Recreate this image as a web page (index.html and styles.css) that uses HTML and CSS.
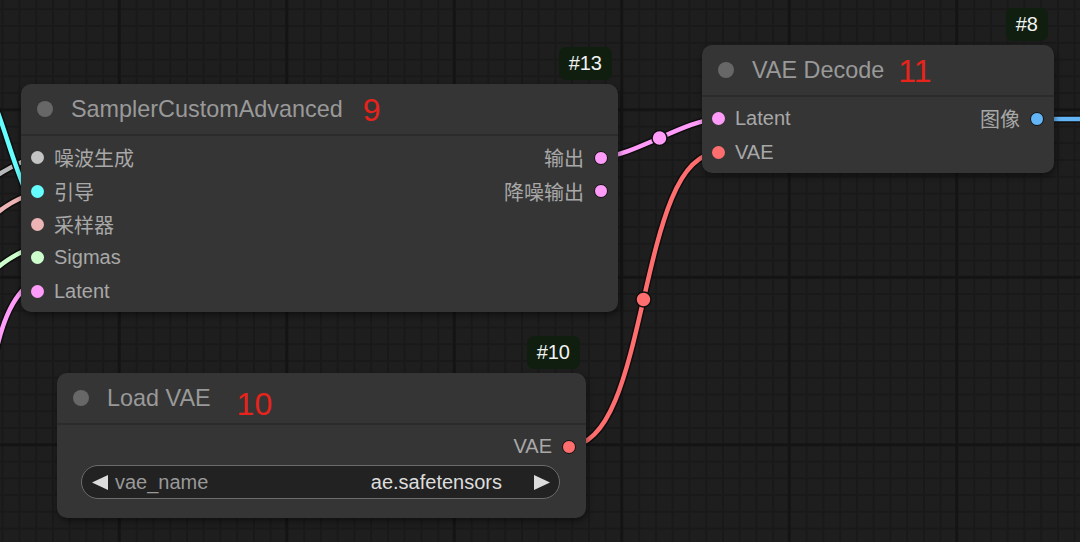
FILE: index.html
```html
<!DOCTYPE html>
<html lang="zh">
<head>
    <meta charset="UTF-8">
    <meta name="viewport" content="width=device-width, initial-scale=1.0">
    <title>ComfyUI graph</title>
    <link rel="stylesheet" href="styles.css">
</head>
<body>

    <div class="canvas">
        <!-- links sit under the nodes -->
        <svg class="links" width="1080" height="542" viewBox="0 0 1080 542">
            <g class="link link-noise">
                <path class="edge" d="M -5 177 Q 8 168 26 160"/>
                <path class="core" d="M -5 177 Q 8 168 26 160"/>
            </g>
            <g class="link link-guider">
                <path class="edge" d="M -3 110 C 8 140, 14 164, 26 192"/>
                <path class="core" d="M -3 110 C 8 140, 14 164, 26 192"/>
            </g>
            <g class="link link-sampler">
                <path class="edge" d="M -5 215 Q 8 203 26 196"/>
                <path class="core" d="M -5 215 Q 8 203 26 196"/>
            </g>
            <g class="link link-sigmas">
                <path class="edge" d="M -5 270 Q 8 258 26 250"/>
                <path class="core" d="M -5 270 Q 8 258 26 250"/>
            </g>
            <g class="link link-latent">
                <path class="edge" d="M -4 352 Q 6 305 26 287"/>
                <path class="core" d="M -4 352 Q 6 305 26 287"/>
            </g>

            <g class="link link-latent">
                <path class="edge" d="M 601 157 C 632 157, 687 119, 718 119"/>
                <path class="core" d="M 601 157 C 632 157, 687 119, 718 119"/>
                <circle class="mid" cx="659.5" cy="138" r="7.5"/>
            </g>
            <g class="link link-vae">
                <path class="edge" d="M 569 446 C 651 446, 636 153, 718 153"/>
                <path class="core" d="M 569 446 C 651 446, 636 153, 718 153"/>
                <circle class="mid" cx="643.5" cy="299.5" r="7.5"/>
            </g>
            <g class="link link-image">
                <path class="edge" d="M 1038 119 L 1090 119"/>
                <path class="core" d="M 1038 119 L 1090 119"/>
            </g>
        </svg>

        <div class="node node-sampler">
            <span class="badge">#13</span>
            <div class="title">
                <span class="title-dot"></span>
                <span class="title-text">SamplerCustomAdvanced</span>
                <span class="num">9</span>
            </div>
            <div class="slots">
                <div class="col inputs">
                    <div class="slot"><span class="dot t-noise"></span>噪波生成</div>
                    <div class="slot"><span class="dot t-guider"></span>引导</div>
                    <div class="slot"><span class="dot t-sampler"></span>采样器</div>
                    <div class="slot"><span class="dot t-sigmas"></span>Sigmas</div>
                    <div class="slot"><span class="dot t-latent"></span>Latent</div>
                </div>
                <div class="col outputs">
                    <div class="slot">输出<span class="dot t-latent"></span></div>
                    <div class="slot">降噪输出<span class="dot t-latent"></span></div>
                </div>
            </div>
        </div>

        <div class="node node-decode">
            <span class="badge">#8</span>
            <div class="title">
                <span class="title-dot"></span>
                <span class="title-text">VAE Decode</span>
                <span class="num num-near">11</span>
            </div>
            <div class="slots">
                <div class="col inputs">
                    <div class="slot"><span class="dot t-latent"></span>Latent</div>
                    <div class="slot"><span class="dot t-vae"></span>VAE</div>
                </div>
                <div class="col outputs">
                    <div class="slot">图像<span class="dot t-image"></span></div>
                </div>
            </div>
        </div>

        <div class="node node-loadvae">
            <span class="badge">#10</span>
            <div class="title">
                <span class="title-dot"></span>
                <span class="title-text">Load VAE</span>
                <span class="num num-far">10</span>
            </div>
            <div class="slots slots-tight">
                <div class="col inputs"></div>
                <div class="col outputs">
                    <div class="slot">VAE<span class="dot t-vae"></span></div>
                </div>
            </div>
            <div class="combo">
                <svg class="arrow" width="16" height="15" viewBox="0 0 16 15"><polygon points="16,0 16,15 0,7.5"/></svg>
                <span class="combo-label">vae_name</span>
                <span class="combo-value">ae.safetensors</span>
                <svg class="arrow" width="16" height="15" viewBox="0 0 16 15"><polygon points="0,0 0,15 16,7.5"/></svg>
            </div>
        </div>
    </div>

</body>
</html>
```

FILE: styles.css
```css
body {
    margin: 0;
    width: 1080px;
    height: 542px;
    overflow: hidden;
    font-family: "Liberation Sans", "Noto Sans CJK SC", sans-serif;
    background-color: #1e1e1e;
    background-image:
        linear-gradient(#141414 3px, transparent 3px),
        linear-gradient(90deg, #141414 3px, transparent 3px),
        linear-gradient(#191919 2px, transparent 2px),
        linear-gradient(90deg, #191919 2px, transparent 2px);
    background-size: 167.5px 167.5px, 167.5px 167.5px, 16.75px 16.75px, 16.75px 16.75px;
    background-position: 0 108.3px, 117.7px 0, 0 8.3px, 1.7px 0;
}

.canvas {
    position: relative;
    width: 1080px;
    height: 542px;
}

/* links */
.links {
    position: absolute;
    left: 0;
    top: 0;
}

.link path {
    fill: none;
    stroke-linecap: round;
}

.link .edge {
    stroke: #0e0e0e;
    stroke-width: 7.5;
}

.link .core {
    stroke-width: 4.5;
}

.link .mid {
    stroke: #0e0e0e;
    stroke-width: 1.5;
}

.link-noise .core { stroke: #b8b8b8; }
.link-guider .core { stroke: #66ffff; }
.link-sampler .core { stroke: #ecb4b4; }
.link-sigmas .core { stroke: #cdffcd; }
.link-latent .core { stroke: #ff9cf9; }
.link-latent .mid { fill: #ff9cf9; }
.link-vae .core { stroke: #ff6e6e; }
.link-vae .mid { fill: #ff6e6e; }
.link-image .core { stroke: #64b5f6; }

/* nodes */
.node {
    position: absolute;
    display: flex;
    flex-direction: column;
    background: #353535;
    border-radius: 10px;
    box-shadow: 1px 3px 6px rgba(0, 0, 0, 0.45);
}

.node-sampler {
    left: 21px;
    top: 84px;
    width: 597px;
}

.node-decode {
    left: 702px;
    top: 45px;
    width: 352px;
}

.node-loadvae {
    left: 57px;
    top: 373px;
    width: 529px;
}

.badge {
    position: absolute;
    right: 6px;
    bottom: calc(100% + 4px);
    height: 33px;
    line-height: 33px;
    padding: 0 10px;
    border-radius: 7px;
    background: #0f1e0f;
    color: #f2f2f2;
    font-size: 20px;
}

.title {
    height: 52px;
    box-sizing: border-box;
    border-bottom: 2px solid #2b2b2b;
    display: flex;
    align-items: center;
    padding-left: 16px;
}

.title-dot {
    flex: none;
    width: 16px;
    height: 16px;
    border-radius: 50%;
    background: #676767;
    margin-right: 18px;
}

.title-text {
    font-size: 23.4px;
    color: #999;
}

.num {
    color: #e8231b;
    font-size: 32px;
    line-height: 1;
    margin-left: 20px;
    margin-top: 2px;
}

.num-near {
    margin-left: 14px;
}

.num-far {
    margin-left: 26px;
    margin-top: 11px;
}

.slots {
    display: flex;
    justify-content: space-between;
    padding: 5px 0 4px;
}

.slots-tight {
    padding-bottom: 0;
}

.col {
    display: flex;
    flex-direction: column;
}

.slot {
    height: 33.4px;
    display: flex;
    align-items: center;
    gap: 10px;
    font-size: 20px;
    color: #a8a8a8;
}

.inputs .slot {
    padding-left: 10px;
}

.outputs .slot {
    padding-right: 10px;
    justify-content: flex-end;
}

.dot {
    flex: none;
    width: 13px;
    height: 13px;
    border-radius: 50%;
    box-sizing: border-box;
}

.outputs .dot {
    width: 14px;
    height: 14px;
    border: 1.5px solid #111;
}

.t-noise { background: #c4c4c4; }
.t-guider { background: #66ffff; }
.t-sampler { background: #ecb4b4; }
.t-sigmas { background: #cdffcd; }
.t-latent { background: #ff9cf9; }
.t-vae { background: #ff6e6e; }
.t-image { background: #64b5f6; }

/* combo widget */
.combo {
    margin: 2px 26px 19px 24px;
    height: 34px;
    box-sizing: border-box;
    border: 1px solid #6b6b6b;
    border-radius: 17px;
    background: #222;
    display: flex;
    align-items: center;
    padding: 0 9px 0 10px;
    font-size: 20px;
}

.arrow {
    flex: none;
    fill: #dcdcdc;
}

.combo-label {
    color: #999;
    margin-left: 7px;
}

.combo-value {
    color: #ddd;
    margin-left: auto;
    margin-right: 32px;
}
```
